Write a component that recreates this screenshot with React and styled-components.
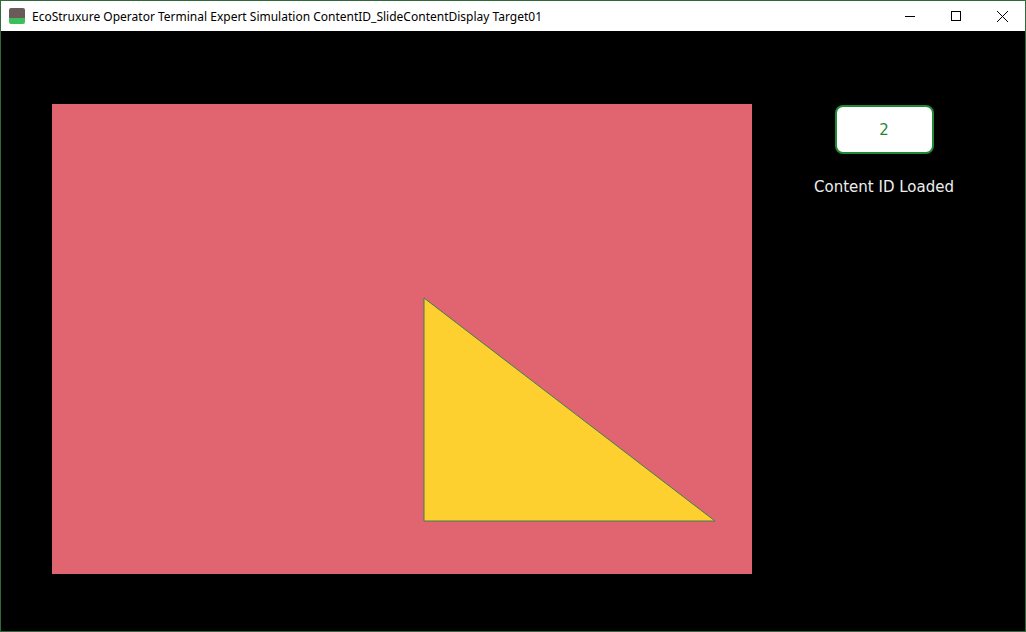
import styled, { createGlobalStyle } from "styled-components";

const Global = createGlobalStyle`
  html, body { margin: 0; padding: 0; background: #000; }
  body { font-family: "Segoe UI", "Noto Sans", sans-serif; }
`;

const Window = styled.div`
  width: 1026px;
  height: 632px;
  box-sizing: border-box;
  border: 1px solid #2f6b3a;
  display: flex;
  flex-direction: column;
  background: #000;
  overflow: hidden;
`;

const TitleBar = styled.div`
  height: 30px;
  background: #fff;
  display: flex;
  align-items: center;
  padding-left: 8px;
  font-size: 12px;
  color: #000;
  font-family: "Noto Sans", "Open Sans", sans-serif;
`;

const AppIcon = styled.div`
  width: 16px;
  height: 16px;
  margin-right: 7px;
  background: linear-gradient(#6a5a5a 0 60%, #3cbf5a 60% 100%);
  border-radius: 2px;
`;

const Title = styled.span`
  flex: 1;
`;

const Ctrl = styled.div`
  width: 46px;
  height: 30px;
  display: flex;
  align-items: center;
  justify-content: center;
`;

const Body = styled.div`
  flex: 1;
  display: flex;
  padding: 73px 0 0 51px;
`;

const Panel = styled.div`
  width: 700px;
  height: 470px;
  background: #e06570;
  position: relative;
`;

const Side = styled.div`
  width: 264px;
  display: flex;
  flex-direction: column;
  align-items: center;
  padding-top: 1px;
`;

const IdBox = styled.div`
  width: 99px;
  height: 49px;
  box-sizing: border-box;
  background: #fff;
  border: 2px solid #1f8a33;
  border-radius: 8px;
  display: flex;
  align-items: center;
  justify-content: center;
  color: #1f8a33;
  font-family: "DejaVu Sans", sans-serif;
  font-size: 15px;
`;

const Label = styled.div`
  margin-top: 24px;
  color: #eee;
  font-family: "DejaVu Sans", sans-serif;
  font-size: 15px;
`;

export default function App() {
  return (
    <>
      <Global />
      <Window>
        <TitleBar>
          <AppIcon />
          <Title>EcoStruxure Operator Terminal Expert Simulation ContentID_SlideContentDisplay Target01</Title>
          <Ctrl>
            <svg width="10" height="10"><path d="M0 5.5h10" stroke="#000" /></svg>
          </Ctrl>
          <Ctrl>
            <svg width="10" height="10"><rect x="0.5" y="0.5" width="9" height="9" fill="none" stroke="#000" /></svg>
          </Ctrl>
          <Ctrl>
            <svg width="11" height="11"><path d="M0 0L11 11M11 0L0 11" stroke="#000" /></svg>
          </Ctrl>
        </TitleBar>
        <Body>
          <Panel>
            <svg width="700" height="470" style={{ position: "absolute", left: 0, top: 0 }}>
              <polygon points="372,194 372,417 663,417" fill="#fed02f" stroke="#3f7f4f" strokeWidth="1" />
            </svg>
          </Panel>
          <Side>
            <IdBox>2</IdBox>
            <Label>Content ID Loaded</Label>
          </Side>
        </Body>
      </Window>
    </>
  );
}
